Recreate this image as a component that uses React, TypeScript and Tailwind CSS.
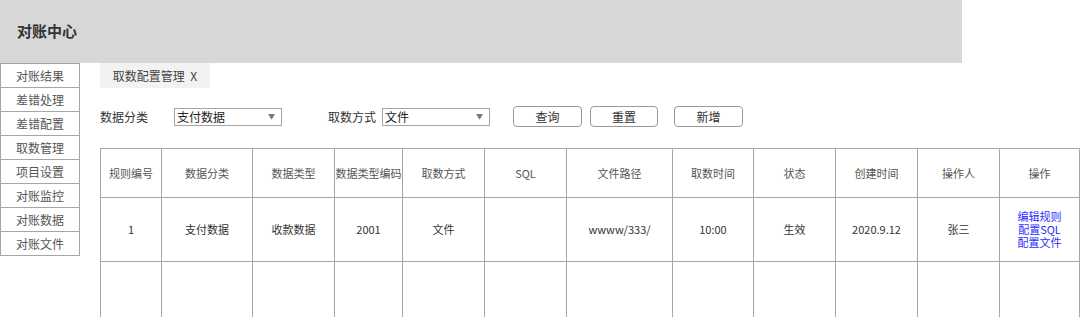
import React from "react";

const menu = ["对账结果", "差错处理", "差错配置", "取数管理", "项目设置", "对账监控", "对账数据", "对账文件"];

const columns = [
  { title: "规则编号", w: 61 },
  { title: "数据分类", w: 91 },
  { title: "数据类型", w: 82 },
  { title: "数据类型编码", w: 68 },
  { title: "取数方式", w: 82 },
  { title: "SQL", w: 82 },
  { title: "文件路径", w: 106 },
  { title: "取数时间", w: 81 },
  { title: "状态", w: 82 },
  { title: "创建时间", w: 82 },
  { title: "操作人", w: 82 },
  { title: "操作", w: 80 },
];

const row = ["1", "支付数据", "收款数据", "2001", "文件", "", "wwww/333/", "10:00", "生效", "2020.9.12", "张三"];

function Select({ value }: { value: string }) {
  return (
    <div className="w-[108px] h-[18px] border border-[#a6a6a6] flex items-center justify-between pl-[2px] pr-[6px] text-[12px] text-[#222]">
      <span>{value}</span>
      <span className="text-[7px] text-[#777]">▼</span>
    </div>
  );
}

function Btn({ label, w }: { label: string; w: string }) {
  return (
    <div className={`${w} h-[21px] border border-[#999] rounded-[4px] flex items-center justify-center text-[12px] text-[#333]`}>
      {label}
    </div>
  );
}

export default function App() {
  return (
    <div
      className="w-[1080px] h-[317px] overflow-hidden bg-white"
      style={{ fontFamily: '"Noto Sans CJK SC", "Noto Sans", sans-serif' }}
    >
      {/* Header */}
      <div className="w-[962px] h-[63px] bg-[#d7d7d7] flex items-center pl-[17px]">
        <span className="text-[15px] font-bold text-[#333]">对账中心</span>
      </div>

      <div className="flex">
        {/* Sidebar */}
        <div className="w-[80px] shrink-0 border border-[#a6a6a6] border-t-0 self-start">
          {menu.map((m) => (
            <div
              key={m}
              className="h-[24px] border-t border-[#a6a6a6] flex items-center justify-center text-[12px] text-[#555]"
            >
              {m}
            </div>
          ))}
        </div>

        {/* Main */}
        <div className="pl-[20px] flex-1">
          <div className="w-[110px] h-[25px] bg-[#f2f2f2] flex items-center justify-center text-[12px] text-[#444]">
            取数配置管理&nbsp;&nbsp;X
          </div>

          <div className="mt-[18px] h-[21px] flex items-center text-[12px] text-[#333]">
            <span className="w-[74px]">数据分类</span>
            <Select value="支付数据" />
            <span className="ml-[46px] w-[54px]">取数方式</span>
            <Select value="文件" />
            <div className="ml-[23px]">
              <Btn label="查询" w="w-[69px]" />
            </div>
            <div className="ml-[8px]">
              <Btn label="重置" w="w-[68px]" />
            </div>
            <div className="ml-[16px]">
              <Btn label="新增" w="w-[69px]" />
            </div>
          </div>

          <table className="mt-[21px] table-fixed border-collapse text-[11px] text-[#333]" style={{ width: 980 }}>
            <colgroup>
              {columns.map((c) => (
                <col key={c.title} style={{ width: c.w }} />
              ))}
            </colgroup>
            <thead>
              <tr className="h-[49px]">
                {columns.map((c) => (
                  <th key={c.title} className="border border-[#a6a6a6] font-normal text-[#555] text-center p-0">
                    {c.title}
                  </th>
                ))}
              </tr>
            </thead>
            <tbody>
              <tr className="h-[64px]">
                {row.map((v, i) => (
                  <td key={i} className="border border-[#a6a6a6] text-center p-0">
                    {v}
                  </td>
                ))}
                <td className="border border-[#a6a6a6] text-center p-0 text-[#2b2bff] leading-[13px]">
                  <div>编辑规则</div>
                  <div>配置SQL</div>
                  <div>配置文件</div>
                </td>
              </tr>
              <tr className="h-[60px]">
                {columns.map((c) => (
                  <td key={c.title} className="border border-[#a6a6a6] p-0" />
                ))}
              </tr>
            </tbody>
          </table>
        </div>
      </div>
    </div>
  );
}
